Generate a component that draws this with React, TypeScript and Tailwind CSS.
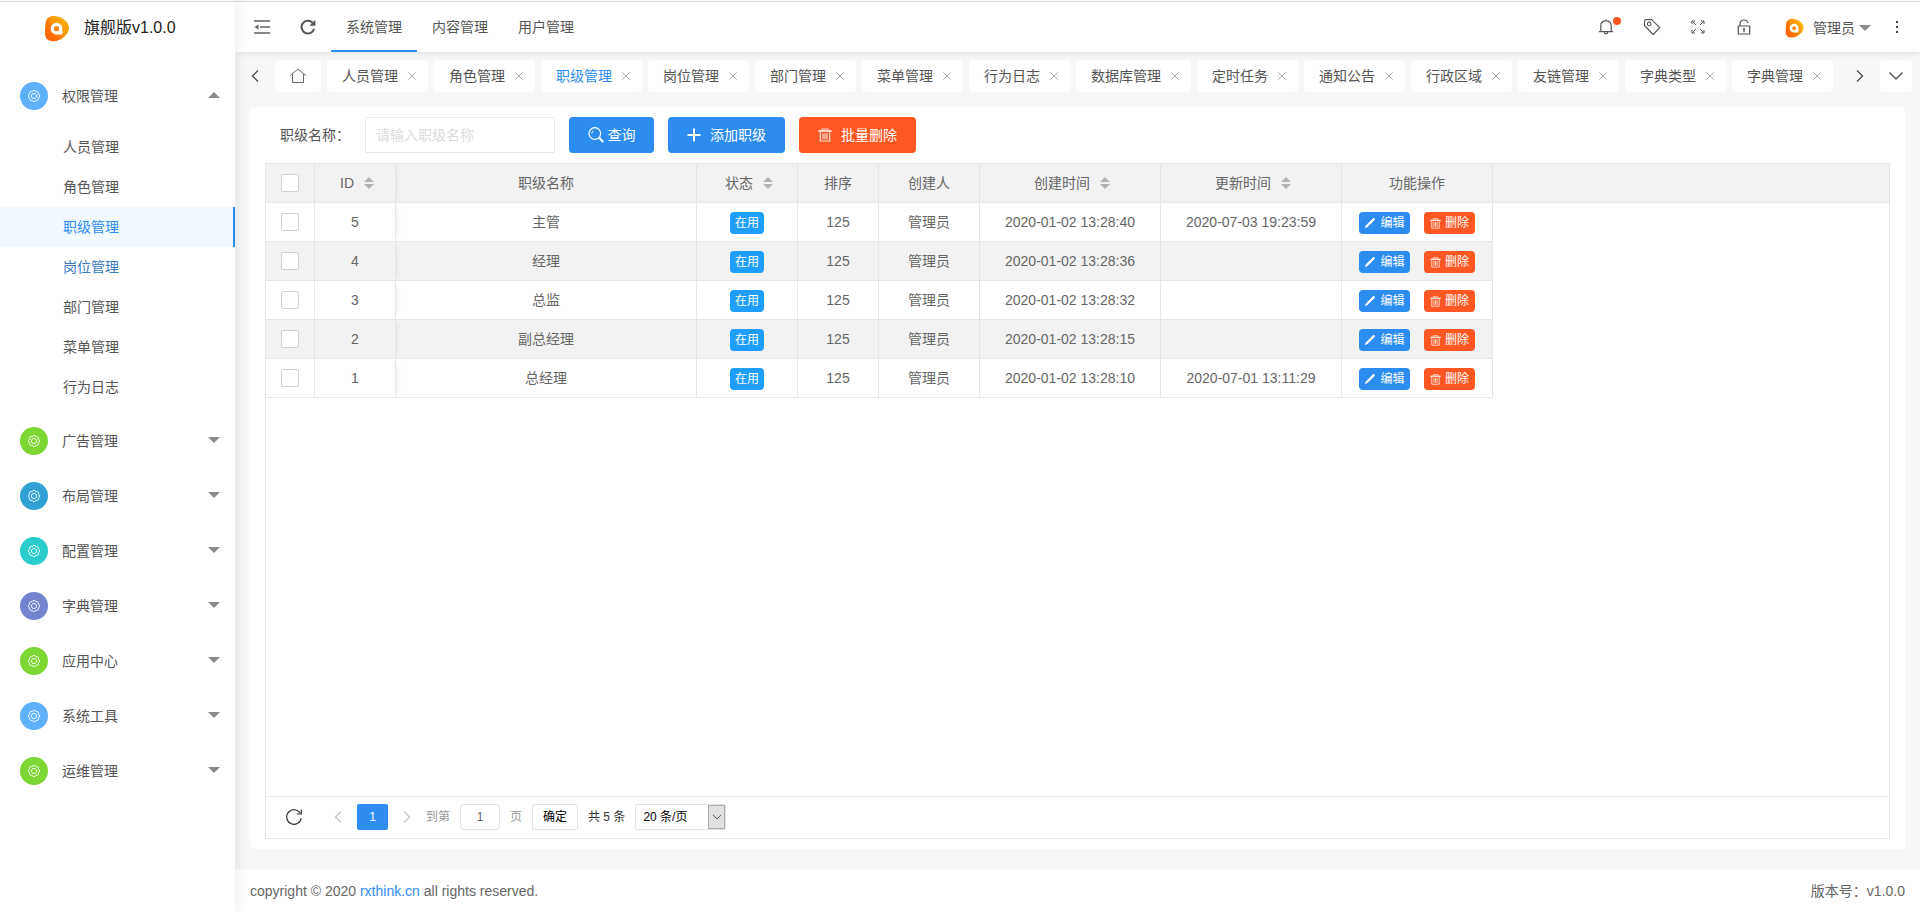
import React from "react";

type Group = { name: string; color: string };

const children = ["人员管理", "角色管理", "职级管理", "岗位管理", "部门管理", "菜单管理", "行为日志"];

const groups: Group[] = [
  { name: "广告管理", color: "bg-[#7dd733]" },
  { name: "布局管理", color: "bg-[#32a2d4]" },
  { name: "配置管理", color: "bg-[#2bcccd]" },
  { name: "字典管理", color: "bg-[#7383cf]" },
  { name: "应用中心", color: "bg-[#7dd733]" },
  { name: "系统工具", color: "bg-[#5fb0fe]" },
  { name: "运维管理", color: "bg-[#7dd733]" },
];

const tabs = [
  "人员管理", "角色管理", "职级管理", "岗位管理", "部门管理", "菜单管理", "行为日志",
  "数据库管理", "定时任务", "通知公告", "行政区域", "友链管理", "字典类型", "字典管理",
];

const rows = [
  { id: 5, name: "主管", created: "2020-01-02 13:28:40", updated: "2020-07-03 19:23:59" },
  { id: 4, name: "经理", created: "2020-01-02 13:28:36", updated: "" },
  { id: 3, name: "总监", created: "2020-01-02 13:28:32", updated: "" },
  { id: 2, name: "副总经理", created: "2020-01-02 13:28:15", updated: "" },
  { id: 1, name: "总经理", created: "2020-01-02 13:28:10", updated: "2020-07-01 13:11:29" },
];

function Logo({ className }: { className: string }) {
  return (
    <svg viewBox="0 0 26 28" className={className} aria-hidden="true">
      <defs>
        <linearGradient id="flame" x1="0" y1="1" x2="1" y2="0.2">
          <stop offset="0" stopColor="#ff5a00" />
          <stop offset="0.35" stopColor="#ff7005" />
          <stop offset="0.65" stopColor="#ff9c08" />
          <stop offset="1" stopColor="#ffb400" />
        </linearGradient>
      </defs>
      <path
        d="M1.200 8C1.800 3.200 5.500.9 10 1c4.200.1 8.600 2 11.800 5 2.600 2.400 3.900 5 3.700 8-.2 3.400-2.100 6.300-5.200 8.800-3.200 2.600-6.900 4.500-10.700 4.500C4.500 27.300 1 24.800.7 20.500.5 16.500.7 12 1.200 8z"
        fill="url(#flame)"
      />
      <circle cx="12.500" cy="14.200" r="6.100" fill="#fff" />
      <path d="M14 16h4.600v4.200H14z" fill="#fff" />
      <circle cx="12.500" cy="14.200" r="2.700" fill="#ff860a" />
    </svg>
  );
}

function Gear() {
  return (
    <svg viewBox="0 0 14 14" className="size-[14px]" fill="none" stroke="#fff" strokeOpacity="0.850" aria-hidden="true">
      <path
        d="M5.240 2.750a1.800 1.800 0 0 1 3.520 0a1.800 1.800 0 0 1 2.490 2.490a1.800 1.800 0 0 1 0 3.520a1.800 1.800 0 0 1-2.490 2.490a1.800 1.800 0 0 1-3.520 0a1.800 1.800 0 0 1-2.490-2.490a1.800 1.800 0 0 1 0-3.520a1.800 1.800 0 0 1 2.490-2.490z"
        strokeLinejoin="round"
      />
      <circle cx="7" cy="7" r="2.600" />
    </svg>
  );
}

function Caret({ up = false }: { up?: boolean }) {
  return (
    <svg viewBox="0 0 12 6" className="h-[6px] w-[12px]" fill="#8a8a8a" aria-hidden="true">
      <path d={up ? "M0 6 6 0l6 6z" : "M0 0h12L6 6z"} />
    </svg>
  );
}

function Chevron({ dir, className }: { dir: "left" | "right" | "down"; className: string }) {
  const d = { left: "M11 2.500 5.500 8l5.500 5.500", right: "M5 2.500 10.500 8 5 13.500", down: "M1.500 4.500 8 11l6.500-6.500" }[dir];
  return (
    <svg viewBox="0 0 16 16" className={className} fill="none" stroke="currentColor" strokeWidth="1.500" aria-hidden="true">
      <path d={d} />
    </svg>
  );
}

function Cross() {
  return (
    <svg viewBox="0 0 8 8" className="size-2" stroke="#aaa" aria-hidden="true">
      <path d="M.3.3l7.400 7.400M7.700.3.3 7.700" />
    </svg>
  );
}

function Sort() {
  return (
    <svg viewBox="0 0 10 12" className="h-3 w-[10px]" fill="#b2b2b2" aria-hidden="true">
      <path d="M0 5 5 0l5 5zM0 7h10l-5 5z" />
    </svg>
  );
}

function Trash({ className }: { className: string }) {
  return (
    <svg viewBox="0 0 14 14" className={className} fill="none" stroke="#fff" strokeOpacity="0.800" aria-hidden="true">
      <path d="M.3 3h13.400" strokeWidth="1.800" />
      <path d="M4 2.200V1h6v1.200M2.300 4v9h9.400V4M5 5.200v6M7 5.200v6M9 5.200v6" strokeWidth="1.200" />
    </svg>
  );
}

function Pencil() {
  return (
    <svg viewBox="0 0 12 12" className="size-3" fill="#fff" aria-hidden="true">
      <path d="M.8 11.200 1.800 8.400 8.500 1.700c.7-.7 1.500-.8 2-.3s.4 1.300-.3 2L3.500 10.100z" />
    </svg>
  );
}

function RefreshBold() {
  return (
    <svg viewBox="0 0 16 16" className="size-4" fill="none" stroke="currentColor" aria-hidden="true">
      <path d="M14.100 9.800A6.400 6.400 0 1 1 12.600 3.700" strokeWidth="2" />
      <path d="M15.300.8v6H9.300z" fill="currentColor" stroke="none" />
    </svg>
  );
}

function RefreshThin() {
  return (
    <svg viewBox="0 0 16 16" className="size-4" fill="none" stroke="currentColor" strokeWidth="1.200" aria-hidden="true">
      <path d="M15.200 9.200A7.300 7.300 0 1 1 14.300 4.300" />
      <path d="M15.300.8v4.200H11" />
    </svg>
  );
}

function SideGroup({ name, color, open = false }: Group & { open?: boolean }) {
  return (
    <button type="button" className="flex w-full items-center pt-[13px] pr-[15px] pb-[14px] pl-5 text-left" aria-expanded={open}>
      <span className={`flex size-7 items-center justify-center rounded-full ${color}`}>
        <Gear />
      </span>
      <span className="ml-[14px] flex-1">{name}</span>
      <span className="pb-[2px]"><Caret up={open} /></span>
    </button>
  );
}

function Sidebar() {
  return (
    <aside className="z-20 w-[235px] shrink-0 bg-white shadow-[2px_0_12px_rgba(29,35,41,0.08)]">
      <a href="#home" className="flex h-[50px] items-center pt-[2px] pl-[44px] text-base text-[#222]">
        <Logo className="h-[27px] w-[26px]" />
        <span className="ml-[14px]">旗舰版v1.0.0</span>
      </a>
      <nav className="mt-[17px]">
        <SideGroup name="权限管理" color="bg-[#5fb0fe]" open />
        <ul className="pt-[3px] pb-[7px]">
          {children.map((name) => (
            <li key={name}>
              <a
                href="#menu"
                className={
                  name === "职级管理"
                    ? "block h-10 border-r-2 border-[#2d8cf0] bg-[#f0faff] pl-[63px] leading-10 text-[#2d8cf0]"
                    : name === "岗位管理"
                      ? "block h-10 pl-[63px] leading-10 text-[#3a78c3]"
                      : "block h-10 pl-[63px] leading-10"
                }
              >
                {name}
              </a>
            </li>
          ))}
        </ul>
        {groups.map((g) => (
          <SideGroup key={g.name} {...g} />
        ))}
      </nav>
    </aside>
  );
}

function Header() {
  return (
    <header className="z-10 flex h-[50px] items-center bg-white pr-[13px] pl-[4px] shadow-[0_1px_6px_rgba(0,21,41,0.1)]">
      <button type="button" aria-label="折叠菜单" className="flex w-[46px] justify-center">
        <svg viewBox="0 0 16 14" className="h-[14px] w-4" fill="none" stroke="#606060" strokeWidth="1.700" aria-hidden="true">
          <path d="M0 1h16M6 7h10M0 13h16" />
          <path d="M.5 7l4-2.600v5.200z" fill="#606060" stroke="none" />
        </svg>
      </button>
      <button type="button" aria-label="刷新" className="flex w-[46px] justify-center text-[#555]">
        <RefreshBold />
      </button>
      <nav className="flex h-full">
        <a href="#system" className="flex items-center border-b-2 border-[#2d8cf0] px-[15px] pt-[2px]">系统管理</a>
        <a href="#content" className="flex items-center border-b-2 border-transparent px-[15px] pt-[2px]">内容管理</a>
        <a href="#user" className="flex items-center border-b-2 border-transparent px-[15px] pt-[2px]">用户管理</a>
      </nav>
      <div className="ml-auto flex items-center">
        <button type="button" aria-label="消息" className="relative flex w-[46px] justify-center">
          <svg viewBox="0 0 16 16" className="size-4" fill="none" stroke="#555" strokeWidth="1.200" aria-hidden="true">
            <path d="M.8 12.700h14.400M2.800 12.700V7c0-3 2-5.200 5.200-5.200S13.200 4 13.200 7v5.700M6.200 13a1.800 1.800 0 0 0 3.600 0M8 .4v1.400" />
          </svg>
          <span className="absolute -top-[2px] left-[30px] size-2 rounded-full bg-[#ff5722]" />
        </button>
        <button type="button" aria-label="便签" className="flex w-[46px] justify-center">
          <svg viewBox="0 0 18 18" className="size-[18px]" fill="none" stroke="#555" strokeWidth="1.100" aria-hidden="true">
            <path d="M1.500 7.500V3.300c0-1 .7-1.700 1.700-1.700l5.200-.2 8.300 8.300-6.500 6.800z" strokeLinejoin="round" />
            <circle cx="6.200" cy="5.900" r="1.800" />
          </svg>
        </button>
        <button type="button" aria-label="全屏" className="flex w-[46px] justify-center">
          <svg viewBox="0 0 14 14" className="size-[14px]" fill="none" stroke="#555" aria-hidden="true">
            <path d="M1 4V1h3M1 1l4 4M10 1h3v3M13 1 9 5M1 10v3h3M1 13l4-4M10 13h3v-3M13 13 9 9" />
          </svg>
        </button>
        <button type="button" aria-label="锁屏" className="flex w-[46px] justify-center">
          <svg viewBox="0 0 14 16" className="h-4 w-[14px]" fill="none" stroke="#555" strokeWidth="1.200" aria-hidden="true">
            <path d="M1.300 7h11.400v8H1.300zM3 7V5c0-2.400 1.600-4 4-4 2 0 3.500 1 4 2.800M7 10v3.200" />
            <circle cx="7" cy="10" r="1.100" fill="#555" stroke="none" />
          </svg>
        </button>
        <button type="button" className="ml-[18px] flex items-center pt-[2px]">
          <Logo className="h-[20px] w-[19px]" />
          <span className="ml-[9px]">管理员</span>
          <span className="ml-[4px]"><Caret /></span>
        </button>
        <button type="button" aria-label="更多" className="ml-[16px] flex w-5 justify-center">
          <svg viewBox="0 0 4 14" className="h-[14px] w-1" fill="#444" aria-hidden="true">
            <path d="M1 1h2v2H1zM1 6h2v2H1zM1 11h2v2H1z" />
          </svg>
        </button>
      </div>
    </header>
  );
}

function TabBar() {
  return (
    <div className="flex h-8 items-center pr-2">
      <button type="button" aria-label="向左" className="flex w-10 justify-center text-[#555]">
        <Chevron dir="left" className="size-4" />
      </button>
      <div className="flex min-w-0 flex-1 gap-[6px] overflow-hidden">
        <a href="#home" aria-label="首页" className="flex h-8 w-[46px] shrink-0 items-center justify-center rounded bg-white">
          <svg viewBox="0 0 16 16" className="size-4" fill="none" stroke="#666" strokeWidth="1" aria-hidden="true">
            <path d="M.3 7.500 8 1l7.700 6.500M2.500 6.200v8.300h11V6.200" />
          </svg>
        </a>
        {tabs.map((name) => (
          <div key={name} className="flex h-8 shrink-0 items-center gap-[10px] rounded bg-white pr-3 pl-[15px]">
            <a href="#tab" className={name === "职级管理" ? "text-[#2d8cf0]" : ""}>{name}</a>
            <button type="button" aria-label="关闭"><Cross /></button>
          </div>
        ))}
      </div>
      <button type="button" aria-label="向右" className="flex w-10 justify-center text-[#555]">
        <Chevron dir="right" className="size-4" />
      </button>
      <button type="button" aria-label="页签操作" className="flex size-8 items-center justify-center rounded bg-white text-[#555]">
        <Chevron dir="down" className="size-4" />
      </button>
    </div>
  );
}

function Check({ label }: { label: string }) {
  return (
    <input
      type="checkbox"
      aria-label={label}
      className="mx-auto block size-[18px] appearance-none rounded-xs border border-[#d2d2d2] bg-white checked:bg-[#2d8cf0]"
    />
  );
}

const headCell = "border-r border-b border-[#e6e6e6] font-normal";
const bodyCell = "border-r border-b border-[#e6e6e6]";

function SortHead({ label }: { label: string }) {
  return (
    <button type="button" className="flex w-full items-center justify-center gap-[10px] pl-1">
      {label}
      <Sort />
    </button>
  );
}

function DataTable() {
  return (
    <div className="flex-1 bg-[linear-gradient(#f2f2f2_38px,#e6e6e6_38px,#e6e6e6_39px,#fff_39px)]">
      <table className="w-[1227px] table-fixed border-separate border-spacing-0 text-center text-[#666]">
        <colgroup>
          <col className="w-[49px]" />
          <col className="w-[81px]" />
          <col className="w-[301px]" />
          <col className="w-[101px]" />
          <col className="w-[81px]" />
          <col className="w-[101px]" />
          <col className="w-[181px]" />
          <col className="w-[181px]" />
          <col className="w-[151px]" />
        </colgroup>
        <thead>
          <tr className="h-[39px]">
            <th className={headCell}><Check label="全选" /></th>
            <th className={`${headCell} shadow-[5px_0_5px_-4px_rgba(0,0,0,0.08)]`}><SortHead label="ID" /></th>
            <th className={headCell}>职级名称</th>
            <th className={headCell}><SortHead label="状态" /></th>
            <th className={headCell}>排序</th>
            <th className={headCell}>创建人</th>
            <th className={headCell}><SortHead label="创建时间" /></th>
            <th className={headCell}><SortHead label="更新时间" /></th>
            <th className={headCell}>功能操作</th>
          </tr>
        </thead>
        <tbody>
          {rows.map((r) => (
            <tr key={r.id} className="h-[39px] bg-white even:bg-[#f2f2f2]">
              <td className={bodyCell}><Check label={`选择 ${r.id}`} /></td>
              <td className={`${bodyCell} shadow-[5px_0_5px_-4px_rgba(0,0,0,0.08)]`}>{r.id}</td>
              <td className={bodyCell}>{r.name}</td>
              <td className={bodyCell}>
                <span className="mx-auto mt-[2px] block h-[22px] w-[34px] rounded bg-[#1e9fff] text-xs leading-[22px] text-white">在用</span>
              </td>
              <td className={bodyCell}>125</td>
              <td className={bodyCell}>管理员</td>
              <td className={bodyCell}>{r.created}</td>
              <td className={bodyCell}>{r.updated}</td>
              <td className={bodyCell}>
                <div className="mt-[2px] flex justify-center gap-[14px] text-xs text-white">
                  <button type="button" className="flex h-[22px] w-[51px] items-center justify-center gap-1 rounded bg-[#2d8cf0]">
                    <Pencil />编辑
                  </button>
                  <button type="button" className="flex h-[22px] w-[51px] items-center justify-center gap-1 rounded bg-[#ff5722]">
                    <Trash className="size-[11px]" />删除
                  </button>
                </div>
              </td>
            </tr>
          ))}
        </tbody>
      </table>
    </div>
  );
}

function Pager() {
  return (
    <div className="flex h-[42px] items-center border-t border-[#e6e6e6] pb-[2px] pl-5 text-xs">
      <button type="button" aria-label="刷新表格" className="text-[#333]">
        <RefreshThin />
      </button>
      <button type="button" aria-label="上一页" className="ml-7 text-[#ccc]">
        <Chevron dir="left" className="size-4" />
      </button>
      <span className="ml-[11px] flex h-[26px] w-[31px] items-center justify-center rounded-xs bg-[#2d8cf0] text-white">1</span>
      <button type="button" aria-label="下一页" className="ml-[11px] text-[#ccc]">
        <Chevron dir="right" className="size-4" />
      </button>
      <label className="ml-[11px] flex items-center text-[#999]">
        到第
        <input defaultValue="1" className="mx-[10px] h-[26px] w-10 rounded border border-[#e2e2e2] text-center text-[#666]" />
        页
      </label>
      <button type="button" className="ml-[10px] h-[26px] w-[46px] rounded-xs border border-[#e2e2e2] text-black">确定</button>
      <span className="ml-[10px] text-[#333]">共 5 条</span>
      <div className="relative ml-[10px] h-[26px] w-[91px]">
        <select aria-label="每页条数" className="h-full w-full appearance-none rounded-xs border border-[#e2e2e2] bg-white pl-[7px] text-black">
          <option>20 条/页</option>
        </select>
        <span className="pointer-events-none absolute top-px right-px flex h-6 w-[17px] items-center justify-center border border-[#adadad] bg-[#e1e1e1] text-[#444]">
          <Chevron dir="down" className="size-[10px]" />
        </span>
      </div>
    </div>
  );
}

export default function App() {
  return (
    <div className="flex min-h-screen flex-col bg-white pt-px font-['Liberation_Sans','Noto_Sans_CJK_SC',sans-serif] text-sm text-[#555]">
      <div className="h-px bg-[#e2e2e2]" />
      <div className="flex flex-1">
        <Sidebar />
        <div className="flex min-w-0 flex-1 flex-col bg-[#f5f7f9]">
          <Header />
          <main className="flex flex-1 flex-col pt-2">
            <TabBar />
            <section className="mx-[15px] mt-[15px] mb-5 flex flex-1 flex-col rounded bg-white px-[15px] py-[10px]">
              <form className="flex items-center" onSubmit={(e) => e.preventDefault()}>
                <label htmlFor="level" className="w-[85px] pl-[15px] whitespace-nowrap">职级名称：</label>
                <input
                  id="level"
                  placeholder="请输入职级名称"
                  className="ml-[15px] h-9 w-[190px] rounded-xs border border-[#e6e6e6] pl-[10px] placeholder:text-[#dcdcdc]"
                />
                <button type="submit" className="ml-[14px] flex h-9 w-[85px] items-center justify-center gap-1 rounded bg-[#2d8cf0] text-white">
                  <svg viewBox="0 0 16 16" className="size-4" fill="none" stroke="#fff" strokeWidth="1.200" aria-hidden="true">
                    <circle cx="6.800" cy="6.500" r="5.800" />
                    <path d="M3.800 6.500a3 3 0 0 1 1.600-2.700" strokeWidth="1" />
                    <path d="M11.200 10.800l4 4.200" strokeWidth="2" />
                  </svg>
                  查询
                </button>
                <button type="button" className="ml-[14px] flex h-9 w-[117px] items-center justify-center gap-[9px] rounded bg-[#2d8cf0] text-white">
                  <svg viewBox="0 0 14 14" className="size-[14px]" stroke="#fff" strokeWidth="2" aria-hidden="true">
                    <path d="M7 .5v13M.5 7h13" />
                  </svg>
                  添加职级
                </button>
                <button type="button" className="ml-[14px] flex h-9 w-[117px] items-center justify-center gap-[9px] rounded bg-[#ff5722] text-white">
                  <Trash className="size-[14px]" />
                  批量删除
                </button>
              </form>
              <div className="mt-[10px] flex flex-1 flex-col border border-[#e6e6e6]">
                <DataTable />
                <Pager />
              </div>
            </section>
          </main>
          <footer className="flex h-[43px] items-center justify-between bg-white px-[15px] text-[#666]">
            <p>copyright © 2020 <a href="#site" className="text-[#2d8cf0]">rxthink.cn</a> all rights reserved.</p>
            <p>版本号：v1.0.0</p>
          </footer>
        </div>
      </div>
    </div>
  );
}
